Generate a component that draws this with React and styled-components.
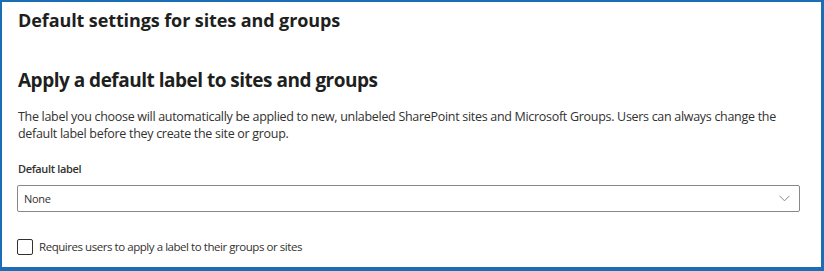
import React from "react";
import styled, { createGlobalStyle } from "styled-components";

const Global = createGlobalStyle`
  html, body { margin: 0; padding: 0; background: #fff; }
  body { font-family: "Open Sans", "Noto Sans", sans-serif; color: #323130; }
`;

const Frame = styled.div`
  box-sizing: border-box;
  width: 824px;
  height: 271px;
  border-style: solid;
  border-color: #1b6db5;
  border-width: 2px 3px 4px 2px;
  padding: 0 21px 0 15px;
  display: flex;
  flex-direction: column;
`;

const Title = styled.h2`
  margin: 6px 0 0 1px;
  font-size: 18px;
  font-weight: 700;
  line-height: 24px;
  letter-spacing: -0.1px;
  color: #201f1e;
`;

const Heading = styled.h3`
  margin: 34px 0 0 1px;
  font-size: 19px;
  font-weight: 700;
  line-height: 28px;
  letter-spacing: -0.5px;
  color: #201f1e;
`;

const Para = styled.p`
  margin: 14px 0 0 1px;
  font-size: 12.5px;
  line-height: 17px;
  letter-spacing: -0.3px;
`;

const FieldLabel = styled.label`
  margin: 19px 0 0 1px;
  font-size: 11px;
  font-weight: 600;
  line-height: 16px;
  letter-spacing: -0.35px;
`;

const Select = styled.div`
  box-sizing: border-box;
  margin-top: 8px;
  height: 27px;
  border: 1px solid #8a8886;
  border-radius: 2px;
  display: flex;
  align-items: center;
  justify-content: space-between;
  padding: 0 9px 0 6px;
  font-size: 11px;
  letter-spacing: -0.3px;
`;

const CheckRow = styled.div`
  margin-top: 27px;
  display: flex;
  align-items: center;
  gap: 6px;
  font-size: 11.5px;
  line-height: 16px;
  letter-spacing: -0.45px;
`;

const Box = styled.span`
  box-sizing: border-box;
  flex: none;
  width: 16px;
  height: 16px;
  border: 1px solid #323130;
  border-radius: 2px;
`;

export default function App() {
  return (
    <>
      <Global />
      <Frame>
        <Title>Default settings for sites and groups</Title>
        <Heading>Apply a default label to sites and groups</Heading>
        <Para>
          The label you choose will automatically be applied to new, unlabeled SharePoint sites and Microsoft Groups. Users can always change the default label before they create the site or group.
        </Para>
        <FieldLabel>Default label</FieldLabel>
        <Select>
          <span>None</span>
          <svg width="11" height="7" viewBox="0 0 11 7">
            <path d="M0.5 0.8 L5.5 5.8 L10.5 0.8" fill="none" stroke="#8a8886" strokeWidth="1" />
          </svg>
        </Select>
        <CheckRow>
          <Box />
          <span>Requires users to apply a label to their groups or sites</span>
        </CheckRow>
      </Frame>
    </>
  );
}
